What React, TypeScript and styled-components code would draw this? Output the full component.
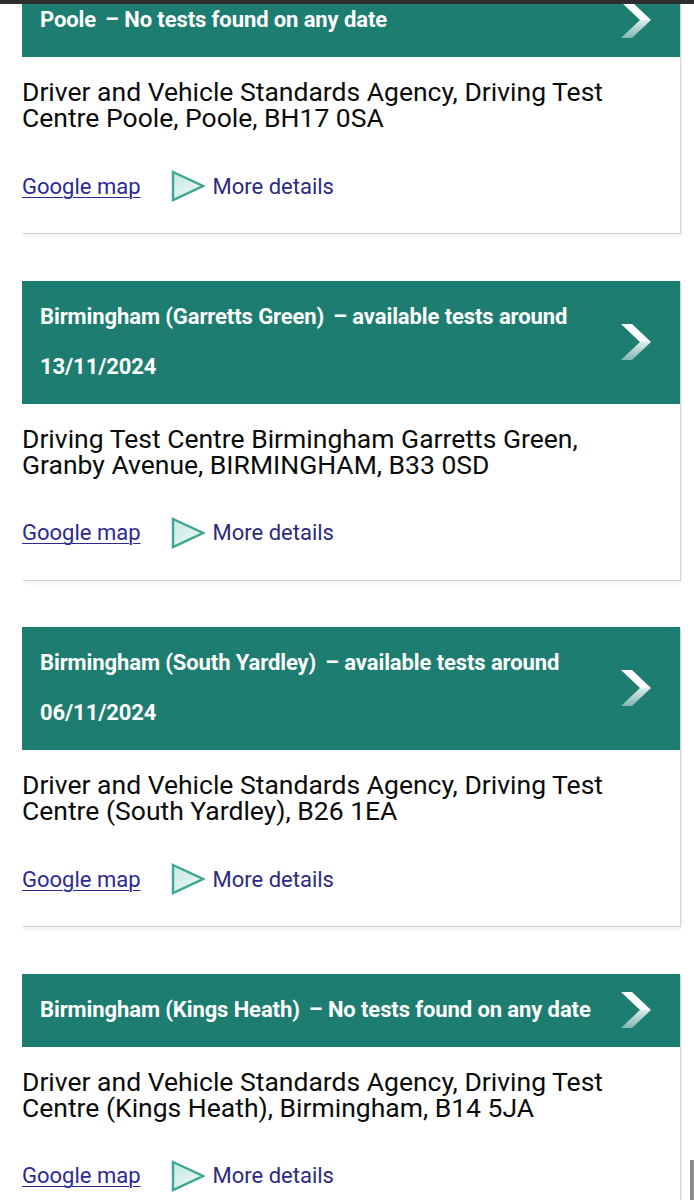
import React from "react";
import styled, { createGlobalStyle } from "styled-components";

interface Centre {
  name: string;
  status: string;
  date?: string;
  address: string;
}

const centres: Centre[] = [
  {
    name: "Poole",
    status: "No tests found on any date",
    address: "Driver and Vehicle Standards Agency, Driving Test Centre Poole, Poole, BH17 0SA",
  },
  {
    name: "Birmingham (Garretts Green)",
    status: "available tests around",
    date: "13/11/2024",
    address: "Driving Test Centre Birmingham Garretts Green, Granby Avenue, BIRMINGHAM, B33 0SD",
  },
  {
    name: "Birmingham (South Yardley)",
    status: "available tests around",
    date: "06/11/2024",
    address: "Driver and Vehicle Standards Agency, Driving Test Centre (South Yardley), B26 1EA",
  },
  {
    name: "Birmingham (Kings Heath)",
    status: "No tests found on any date",
    address: "Driver and Vehicle Standards Agency, Driving Test Centre (Kings Heath), Birmingham, B14 5JA",
  },
];

const GlobalStyle = createGlobalStyle`
  html, body {
    margin: 0;
    padding: 0;
    background: #ffffff;
    overflow: hidden;
  }
  body {
    font-family: Roboto, "Noto Sans", sans-serif;
    color: #0b0c0c;
  }
`;

const TopEdge = styled.div`
  position: fixed;
  top: 0;
  left: 0;
  right: 0;
  height: 4px;
  background: #2e2e2e;
  z-index: 2;
`;

const ScrollThumb = styled.div`
  position: fixed;
  right: 0;
  bottom: 0;
  width: 4px;
  height: 40px;
  background: #8c8c8c;
  z-index: 2;
`;

const List = styled.div`
  display: flex;
  flex-direction: column;
  gap: 47.5px;
  margin-top: -16px;
  padding: 0 14px 0 22px;
`;

const Card = styled.div`
  background: #ffffff;
  box-shadow: 1px 1px 0 #d3d3d3, 2px 3px 4px rgba(0, 0, 0, 0.07);
`;

const Header = styled.div`
  display: flex;
  align-items: center;
  justify-content: space-between;
  gap: 8px;
  padding: 11px 29px 12px 18px;
  background: #1d7d70;
`;

const Title = styled.div`
  flex: 1;
  font-size: 22px;
  font-weight: 700;
  line-height: 50px;
  letter-spacing: -0.1px;
  color: #ffffff;
  & > span.status {
    margin-left: 9px;
  }
`;

const Body = styled.div`
  padding: 22px 44px 32px 0;
`;

const Address = styled.p`
  margin: 0;
  font-size: 26.5px;
  line-height: 26px;
  color: #0b0c0c;
`;

const Links = styled.div`
  display: flex;
  align-items: center;
  height: 30px;
  margin-top: 40px;
  font-size: 22px;
`;

const MapLink = styled.a`
  color: #2a2a94;
  text-decoration: underline;
  text-underline-offset: 3px;
  text-decoration-thickness: 1px;
`;

const DetailsLink = styled.a`
  display: flex;
  align-items: center;
  gap: 8px;
  margin-left: 30px;
  color: #2b2b80;
  text-decoration: none;
`;

const Chevron = () => (
  <svg width="30" height="36" viewBox="0 0 30 36" style={{ flexShrink: 0 }}>
    <defs>
      <linearGradient id="chev-low" x1="0" y1="0" x2="0" y2="1">
        <stop offset="0" stopColor="#ffffff" stopOpacity="0.85" />
        <stop offset="1" stopColor="#ffffff" stopOpacity="0.45" />
      </linearGradient>
    </defs>
    <polygon points="0,0 11,0 30,18 19,18" fill="#ffffff" />
    <polygon points="19,18 30,18 11,36 0,36" fill="url(#chev-low)" />
  </svg>
);

const Play = () => (
  <svg width="34" height="32" viewBox="0 0 34 32">
    <defs>
      <linearGradient id="play-fill" x1="0" y1="0" x2="1" y2="1">
        <stop offset="0" stopColor="#c6e9e2" />
        <stop offset="1" stopColor="#eef8f6" />
      </linearGradient>
    </defs>
    <polygon
      points="2,2 32,16 2,30"
      fill="url(#play-fill)"
      stroke="#3fa693"
      strokeWidth="2.4"
      strokeLinejoin="miter"
    />
  </svg>
);

const CentreCard: React.FC<{ centre: Centre }> = ({ centre }) => {
  const { name, status, date, address } = centre;
  return (
    <Card>
      <Header>
        <Title>
          {name}
          <span className="status">– {status}</span>
          {date && <> {date}</>}
        </Title>
        <Chevron />
      </Header>
      <Body>
        <Address>{address}</Address>
        <Links>
          <MapLink href="#">Google map</MapLink>
          <DetailsLink href="#">
            <Play />
            More details
          </DetailsLink>
        </Links>
      </Body>
    </Card>
  );
};

export default function App() {
  return (
    <>
      <GlobalStyle />
      <TopEdge />
      <List>
        {centres.map((c) => (
          <CentreCard key={c.name} centre={c} />
        ))}
      </List>
      <ScrollThumb />
    </>
  );
}
